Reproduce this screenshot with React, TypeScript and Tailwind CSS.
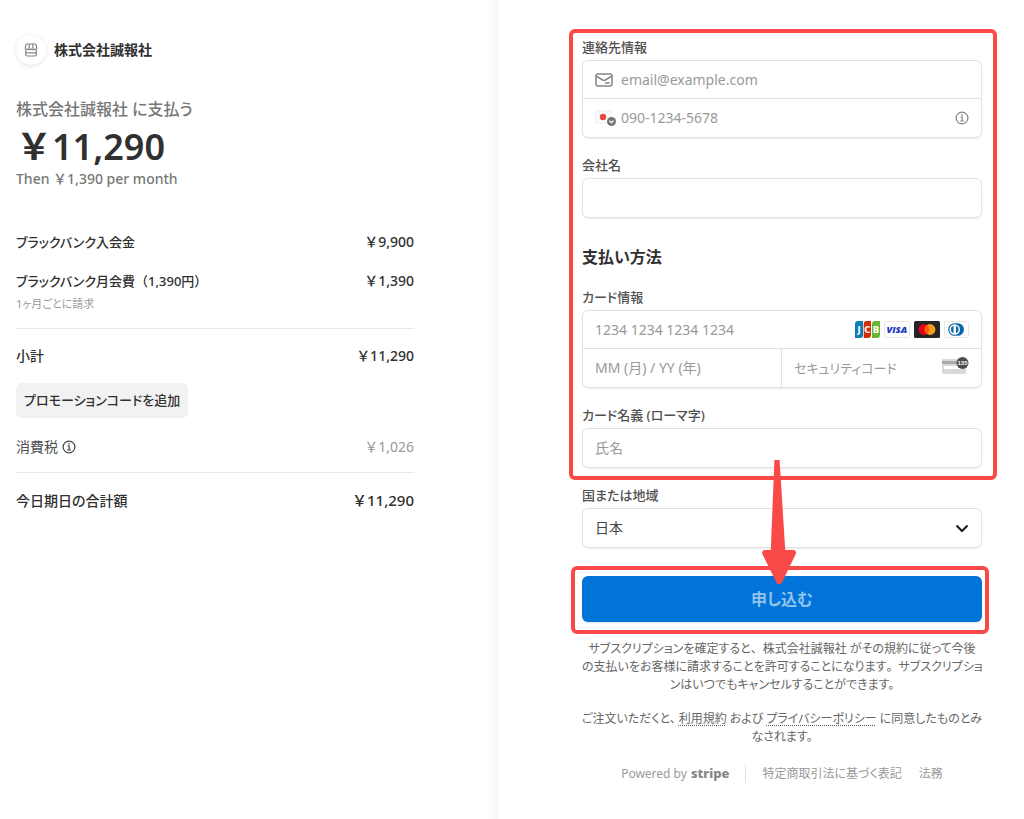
import React from 'react';

const labelClass = 'block h-5 mb-[3px] text-[13px] leading-5 font-medium text-[#505050]';
const boxClass = 'rounded-md border border-[#e2e2e2] bg-white shadow-[0_1px_2px_rgba(0,0,0,0.08)]';
const inputClass =
  'min-w-0 flex-1 self-stretch bg-transparent text-sm text-[#444] outline-none placeholder:text-[#999]';
const linkClass = 'underline decoration-dotted underline-offset-2';

function StoreIcon() {
  return (
    <svg viewBox="0 0 14 14" className="size-3.5" fill="none" stroke="#858585" strokeWidth="1.2" strokeLinejoin="round" aria-hidden="true">
      <path d="M3 1h8c.7 0 1 .3 1.100.9l.6 3.300v.6c-.5 1-2 1-2.700 0-.7 1-2.300 1-3 0-.7 1-2.300 1-3 0-.7 1-2.200 1-2.700 0v-.6l.6-3.300C2 1.300 2.300 1 3 1z" />
      <path d="M5.200 1v4.500M8.800 1v4.500M1.700 7v4.600c0 .8.5 1.400 1.300 1.400h8c.8 0 1.300-.6 1.300-1.400V7M1.700 9.800h10.600" />
    </svg>
  );
}

function InfoIcon({ color }: { color: string }) {
  return (
    <svg viewBox="0 0 14 14" className="size-3.5" fill="none" stroke={color} strokeWidth="1.2" aria-hidden="true">
      <circle cx="7" cy="7" r="5.9" />
      <path d="M5.5 6h1.7v4M5.2 10h3.7" />
      <circle cx="7" cy="3.9" r="0.8" fill={color} stroke="none" />
    </svg>
  );
}

function MailIcon() {
  return (
    <svg viewBox="0 0 18 14" className="h-3.5 w-[18px]" fill="none" stroke="#858585" strokeWidth="1.5" strokeLinecap="round" strokeLinejoin="round" aria-hidden="true">
      <rect x="1" y="0.9" width="16" height="12.2" rx="2" />
      <path d="M1.3 3.2 7.6 7c.9.5 1.9.5 2.8 0l6.3-3.8M10.5 10h3.8" />
    </svg>
  );
}

function FlagIcon() {
  return (
    <svg viewBox="0 0 21 16" className="h-4 w-[21px]" aria-hidden="true">
      <rect x="0.5" y="1" width="16" height="12" rx="1" fill="#f8fafd" stroke="#eaf0f7" />
      <circle cx="8" cy="7" r="3.2" fill="#e8483f" />
      <circle cx="16.5" cy="11.5" r="4.5" fill="#757575" />
      <path d="m14.500 10.800 2 1.900 2-1.900" fill="none" stroke="#fff" strokeWidth="1.3" />
    </svg>
  );
}

function CardLogos() {
  return (
    <div className="flex gap-1" aria-hidden="true">
      <svg viewBox="0 0 25 17" className="h-[17px] w-[25px]">
        <path d="M3 0h5v14a3 3 0 0 1-3 3H0V3a3 3 0 0 1 3-3z" fill="#0b7cb5" />
        <path d="M11.500 0h4.500v14a3 3 0 0 1-3 3H8.700V3a3 3 0 0 1 2.800-3z" fill="#d42d06" />
        <path d="M20 0h5v14a3 3 0 0 1-3 3h-5V3a3 3 0 0 1 3-3z" fill="#67b637" />
        <g fill="#fff" fontFamily="DejaVu Sans, sans-serif" fontWeight="700" fontSize="8.5" textAnchor="middle">
          <text x="4" y="11.6">J</text>
          <text x="12.3" y="11.6">C</text>
          <text x="21" y="11.6">B</text>
        </g>
      </svg>
      <svg viewBox="0 0 26 17" className="h-[17px] w-[26px]">
        <rect x="0.5" y="0.5" width="25" height="16" rx="1" fill="#fff" stroke="#e8e8e8" />
        <text x="12.8" y="12" fill="#1d36c6" fontFamily="Open Sans, sans-serif" fontWeight="800" fontStyle="italic" fontSize="9.5" textAnchor="middle">VISA</text>
      </svg>
      <svg viewBox="0 0 26 17" className="h-[17px] w-[26px]">
        <rect width="26" height="17" rx="1.5" fill="#252525" />
        <circle cx="10" cy="8.5" r="5.4" fill="#eb001b" />
        <circle cx="16" cy="8.5" r="5.4" fill="#f79e1b" />
        <path d="M13 4.010a5.400 5.400 0 0 1 0 8.980 5.400 5.400 0 0 1 0-8.980z" fill="#ff5f00" />
      </svg>
      <svg viewBox="0 0 25 17" className="h-[17px] w-[25px]">
        <rect x="0.5" y="0.5" width="24" height="16" rx="1" fill="#fff" stroke="#e8e8e8" />
        <path d="M10.500 2.200h3.200a6.300 6.300 0 0 1 0 12.600h-3.200a6.300 6.300 0 0 1 0-12.600z" fill="#0a69aa" />
        <circle cx="10.7" cy="8.5" r="5.3" fill="#fff" />
        <path d="M9.500 4.800a3.900 3.900 0 0 0 0 7.400zM12 4.800v7.400a3.900 3.900 0 0 0 0-7.400z" fill="#0a69aa" />
      </svg>
    </div>
  );
}

function CvcIcon() {
  return (
    <svg viewBox="0 0 27 18" className="mb-1 h-[18px] w-[27px]" aria-hidden="true">
      <rect y="2" width="24" height="15" rx="1.5" fill="#d9d9d9" />
      <rect y="4" width="24" height="3" fill="#aaa" />
      <rect x="2" y="9" width="20" height="3" fill="#fff" />
      <circle cx="20.5" cy="6" r="6" fill="#4b4b4b" />
      <text x="20.5" y="8.3" fill="#fff" fontFamily="Liberation Sans, sans-serif" fontWeight="700" fontSize="6" textAnchor="middle">135</text>
    </svg>
  );
}

function Arrow() {
  return (
    <svg viewBox="0 0 34 124" className="pointer-events-none absolute bottom-[38px] left-1/2 z-10 h-[124px] w-[34px] -translate-x-5" fill="#f94a47" aria-hidden="true">
      <path d="M12.400 0h5.200l5.600 90h7.800a2.800 2.800 0 0 1 2.600 4.200L20 122.500a3.200 3.200 0 0 1-5.600 0L.5 94.200A2.800 2.800 0 0 1 3 90h5.800z" />
    </svg>
  );
}

function Row({ name, note, price, className }: { name: string; note?: string; price: string; className: string }) {
  return (
    <div className={`flex h-5 items-center justify-between leading-5 font-medium ${className}`}>
      <dt className="text-[13px]">
        {name}
        {note && <span className="[font-feature-settings:normal]">{note}</span>}
      </dt>
      <dd className="[font-feature-settings:normal]">{price}</dd>
    </div>
  );
}

function Summary() {
  return (
    <section className="pt-[35px] pr-[84px] pl-4 text-sm text-[#303030] shadow-[inset_-10px_0_10px_-8px_rgba(0,0,0,0.06)]">
      <header className="flex h-[30px] items-center gap-2">
        <span className="flex size-[30px] items-center justify-center rounded-full bg-white shadow-[0_1px_4px_rgba(0,0,0,0.12)]">
          <StoreIcon />
        </span>
        <span className="font-semibold">株式会社誠報社</span>
      </header>
      <h1 className="mt-8 text-base leading-6 font-medium text-[#777]">株式会社誠報社 に支払う</h1>
      <p className="mt-1 text-4xl leading-[44px] font-semibold [font-feature-settings:normal]">￥11,290</p>
      <p className="leading-5 font-medium text-[#777] [font-feature-settings:normal]">Then ￥1,390 per month</p>
      <dl>
        <Row name="ブラックバンク入会金" price="￥9,900" className="mt-[43px]" />
        <Row name="ブラックバンク月会費" note="（1,390円）" price="￥1,390" className="mt-[19px]" />
        <dd className="mt-1 text-[11px] leading-[18px] text-[#999]">1ヶ月ごとに請求</dd>
      </dl>
      <hr className="mt-[15px] border-[#e8e8e8]" />
      <dl>
        <div className="mt-[17px] flex h-5 items-center justify-between font-medium">
          <dt>小計</dt>
          <dd className="[font-feature-settings:normal]">￥11,290</dd>
        </div>
      </dl>
      <button type="button" className="mt-[17px] h-[35px] rounded-md bg-[#f2f2f2] px-2 text-[13px] font-medium">
        プロモーションコードを追加
      </button>
      <dl className="mt-[19px] flex h-5 items-center justify-between">
        <dt className="flex items-center gap-1 text-[#505050]">
          消費税 <InfoIcon color="#444" />
        </dt>
        <dd className="text-[#999] [font-feature-settings:normal]">￥1,026</dd>
      </dl>
      <hr className="mt-[15px] border-[#e8e8e8]" />
      <dl>
        <div className="mt-[18px] flex h-5 items-center justify-between font-medium">
          <dt>今日期日の合計額</dt>
          <dd className="text-[15px] [font-feature-settings:normal]">￥11,290</dd>
        </div>
      </dl>
    </section>
  );
}

function PaymentForm() {
  return (
    <form className="pt-[37px] pr-[42px] pb-8 pl-[84px]" onSubmit={(e) => e.preventDefault()}>
      <div className="relative">
        <div className="pointer-events-none absolute -top-2 -right-[15px] -bottom-3 -left-[13px] rounded-md border-4 border-[#f94a47]" />
        <label htmlFor="email" className={labelClass}>連絡先情報</label>
        <div className={boxClass}>
          <div className="flex h-[38px] items-center gap-2 border-b border-[#e2e2e2] px-3">
            <MailIcon />
            <input id="email" type="email" placeholder="email@example.com" className={inputClass} />
          </div>
          <div className="flex h-[38px] items-center gap-[5px] px-3">
            <FlagIcon />
            <input type="tel" aria-label="電話番号" placeholder="090-1234-5678" className={inputClass} />
            <InfoIcon color="#888" />
          </div>
        </div>
        <label htmlFor="company" className={`mt-[17px] ${labelClass}`}>会社名</label>
        <div className={`flex h-10 px-3 ${boxClass}`}>
          <input id="company" className={inputClass} />
        </div>
        <h2 className="mt-[25px] text-base leading-7 font-semibold text-[#303030]">支払い方法</h2>
        <label htmlFor="card" className={`mt-4 ${labelClass}`}>カード情報</label>
        <div className={boxClass}>
          <div className="flex h-[38px] items-center border-b border-[#e2e2e2] px-3">
            <input id="card" placeholder="1234 1234 1234 1234" className={inputClass} />
            <CardLogos />
          </div>
          <div className="grid h-[38px] grid-cols-2">
            <div className="flex border-r border-[#e2e2e2] px-3">
              <input aria-label="有効期限" placeholder="MM (月) / YY (年)" className={inputClass} />
            </div>
            <div className="flex items-center px-3">
              <input aria-label="セキュリティコード" placeholder="セキュリティコード" className={`placeholder:text-[13px] ${inputClass}`} />
              <CvcIcon />
            </div>
          </div>
        </div>
        <label htmlFor="holder" className={`mt-[17px] ${labelClass}`}>カード名義 (ローマ字)</label>
        <div className={`flex h-10 px-3 ${boxClass}`}>
          <input id="holder" placeholder="氏名" className={inputClass} />
        </div>
      </div>
      <label htmlFor="country" className={`mt-[17px] ${labelClass}`}>国または地域</label>
      <div className={`grid h-10 items-center ${boxClass}`}>
        <select id="country" className="col-start-1 row-start-1 h-full w-full appearance-none bg-transparent px-3 text-sm text-[#444] outline-none">
          <option>日本</option>
        </select>
        <svg viewBox="0 0 14 14" className="pointer-events-none col-start-1 row-start-1 mr-3 size-3.5 justify-self-end" fill="none" stroke="#1a1a1a" strokeWidth="2" aria-hidden="true">
          <path d="m1.500 4.500 5.500 5.500 5.500-5.500" />
        </svg>
      </div>
      <div className="relative mt-7">
        <div className="pointer-events-none absolute -top-2.5 -right-[7px] -bottom-3 -left-[11px] rounded-md border-4 border-[#f94a47]" />
        <Arrow />
        <button type="submit" className="block h-[46px] w-full rounded-md bg-[#0074d9] text-base font-semibold text-[#91c3ee] shadow-[0_1px_2px_rgba(0,0,0,0.12)]">
          申し込む
        </button>
      </div>
      <div className="mt-[18px] text-center text-xs leading-[18px] whitespace-nowrap text-[#666]">
        <p>
          サブスクリプションを確定すると<span className="[font-feature-settings:normal]">、</span>株式会社誠報社 がその規約に従って今後
          <br />
          の支払いをお客様に請求することを許可することになります<span className="[font-feature-settings:normal]">。</span>サブスクリプショ
          <br />
          ンはいつでもキャンセルすることができます。
        </p>
        <p className="mt-4 flex justify-center gap-[3px]">
          <span>ご注文いただくと、</span>
          <a href="#terms" className={linkClass}>利用規約</a>
          <span>および</span>
          <a href="#privacy" className={linkClass}>プライバシーポリシー</a>
          <span>に同意したものとみ</span>
        </p>
        <p>なされます。</p>
      </div>
      <footer className="mt-[18px] flex h-5 items-center justify-center text-xs text-[#999]">
        <a href="#stripe" className="flex items-center gap-1">
          Powered by <span className="text-[13px] font-extrabold text-[#858585]">stripe</span>
        </a>
        <span className="mx-4 h-[18px] w-px bg-[#dedede]" />
        <a href="#law">特定商取引法に基づく表記</a>
        <a href="#legal" className="ml-[17px]">法務</a>
      </footer>
    </form>
  );
}

export default function App() {
  return (
    <main lang="ja" className="grid min-h-screen grid-cols-[minmax(0,498fr)_minmax(0,526fr)] bg-white font-['Noto_Sans','Noto_Sans_CJK_JP',sans-serif] [font-feature-settings:'palt']">
      <Summary />
      <PaymentForm />
    </main>
  );
}
